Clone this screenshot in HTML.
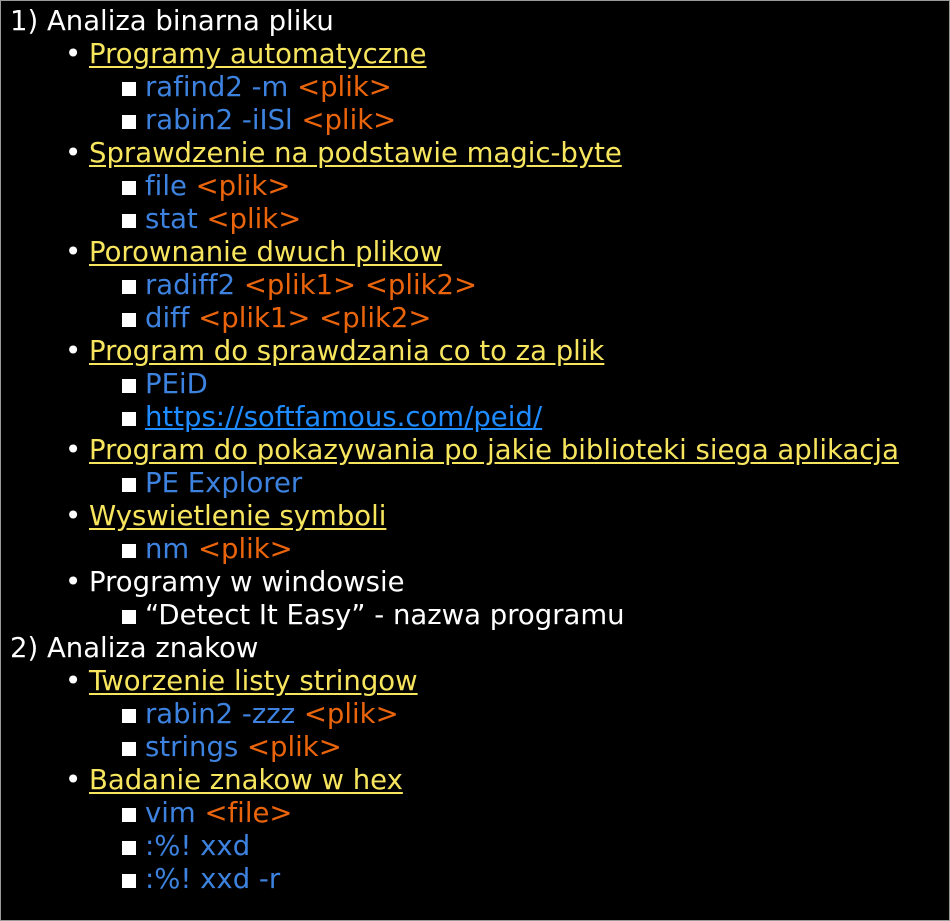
<!DOCTYPE html>
<html><head><meta charset="utf-8"><style>
html,body{margin:0;padding:0;background:#000;}
#c{position:relative;width:948px;height:919px;border:1px solid #9a9a9a;background:#000;overflow:hidden;font-family:"DejaVu Sans","Liberation Sans",sans-serif;font-size:27.5px;font-variant-ligatures:none;}
#w{position:absolute;left:0;top:2px;width:100%;height:100%}
.l{position:absolute;height:33px;line-height:33px;white-space:nowrap;color:#fff;}
.l0{left:9px}.l1{left:88px}.l2{left:144px}
.l1:before{content:"•";position:absolute;left:-24px;color:#fff}
.l2:before{content:"";position:absolute;left:-23px;top:11px;width:14px;height:14px;background:#fff}
.y{color:#f7e55e;text-decoration:underline;text-underline-offset:3px}
.b{color:#3d82de}.o{color:#ea640b}.k{color:#1e8bff;text-decoration:underline}
</style></head><body><div id="c"><div id="w">
<div class="l l0" style="top:2px">1) Analiza binarna pliku</div>
<div class="l l1" style="top:35px"><span class="y">Programy automatyczne</span></div>
<div class="l l2" style="top:68px"><span class="b">rafind2 -m </span><span class="o">&lt;plik&gt;</span></div>
<div class="l l2" style="top:101px"><span class="b">rabin2 -iISl </span><span class="o">&lt;plik&gt;</span></div>
<div class="l l1" style="top:134px"><span class="y">Sprawdzenie na podstawie magic-byte</span></div>
<div class="l l2" style="top:167px"><span class="b">file </span><span class="o">&lt;plik&gt;</span></div>
<div class="l l2" style="top:200px"><span class="b">stat </span><span class="o">&lt;plik&gt;</span></div>
<div class="l l1" style="top:233px"><span class="y">Porownanie dwuch plikow</span></div>
<div class="l l2" style="top:266px"><span class="b">radiff2 </span><span class="o">&lt;plik1&gt; &lt;plik2&gt;</span></div>
<div class="l l2" style="top:299px"><span class="b">diff </span><span class="o">&lt;plik1&gt; &lt;plik2&gt;</span></div>
<div class="l l1" style="top:332px"><span class="y">Program do sprawdzania co to za plik</span></div>
<div class="l l2" style="top:365px"><span class="b">PEiD</span></div>
<div class="l l2" style="top:398px"><span class="k">https://softfamous.com/peid/</span></div>
<div class="l l1" style="top:431px"><span class="y">Program do pokazywania po jakie biblioteki siega aplikacja</span></div>
<div class="l l2" style="top:464px"><span class="b">PE Explorer</span></div>
<div class="l l1" style="top:497px"><span class="y">Wyswietlenie symboli</span></div>
<div class="l l2" style="top:530px"><span class="b">nm </span><span class="o">&lt;plik&gt;</span></div>
<div class="l l1" style="top:563px">Programy w windowsie</div>
<div class="l l2" style="top:596px">“Detect It Easy” - nazwa programu</div>
<div class="l l0" style="top:629px">2) Analiza znakow</div>
<div class="l l1" style="top:662px"><span class="y">Tworzenie listy stringow</span></div>
<div class="l l2" style="top:695px"><span class="b">rabin2 -zzz </span><span class="o">&lt;plik&gt;</span></div>
<div class="l l2" style="top:728px"><span class="b">strings </span><span class="o">&lt;plik&gt;</span></div>
<div class="l l1" style="top:761px"><span class="y">Badanie znakow w hex</span></div>
<div class="l l2" style="top:794px"><span class="b">vim </span><span class="o">&lt;file&gt;</span></div>
<div class="l l2" style="top:827px"><span class="b">:%! xxd</span></div>
<div class="l l2" style="top:860px"><span class="b">:%! xxd -r</span></div>
</div></div></body></html>
